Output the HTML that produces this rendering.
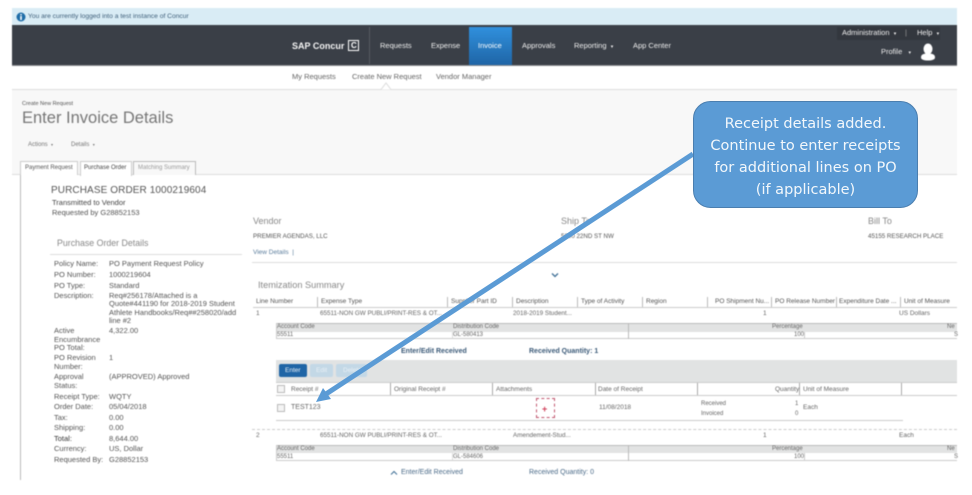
<!DOCTYPE html>
<html><head><meta charset="utf-8"><style>
html,body{margin:0;padding:0;background:#fff}
body{width:972px;height:495px;position:relative;overflow:hidden;font-family:"Liberation Sans",sans-serif}
#p{position:absolute;left:0;top:0;width:972px;height:495px;overflow:hidden;filter:blur(.4px)}
#p i{font-style:normal;position:absolute;white-space:nowrap;line-height:10px;font-size:7px;color:#555}
#p b{position:absolute;display:block;font-weight:normal}
.n{color:#eee!important;font-size:7.5px!important}
.s{color:#666!important;font-size:7.5px!important}
.l{color:#555!important;font-size:7.5px!important}
.h{color:#555!important;font-size:6.5px!important}
.k{color:#3b5a78!important;font-size:7px!important;font-weight:bold}
.x{color:#666!important;font-size:6.5px!important}
.c{color:#555!important;font-size:6.2px!important}
</style></head><body>
<div id="p">
<b style="left:12px;top:8px;width:945px;height:17px;background:#d9ecf5"></b>
<b style="left:12px;top:25px;width:945px;height:41px;background:#3a3f47;border-bottom:1px solid #8a8d90;box-sizing:border-box"></b>
<b style="left:837px;top:27px;width:103px;height:13px;background:#33373e"></b>
<b style="left:469px;top:27px;width:43px;height:38px;background:linear-gradient(#3090dd,#1f65a6)"></b>
<b style="left:369px;top:27px;width:1px;height:37px;background:#555a60"></b>
<b style="left:12px;top:66px;width:945px;height:23px;background:#fff;border-bottom:1px solid #ddd;box-sizing:content-box"></b>
<b style="left:12px;top:90px;width:945px;height:84px;background:#f8f8f8;border-bottom:1px solid #ddd"></b>
<svg style="position:absolute;left:378px;top:82px" width="16" height="9"><path d="M0 7.5H3L8 1L13 7.5H16" fill="#fff" stroke="#ddd"/></svg>

<svg style="position:absolute;left:16px;top:12px" width="10" height="10"><circle cx="5" cy="5" r="4.5" fill="#1f6da8"/><rect x="4.2" y="4" width="1.6" height="4" fill="#fff"/><rect x="4.2" y="2" width="1.6" height="1.3" fill="#fff"/></svg>
<i style="left:28px;top:12px;font-size:6.7px;color:#3f5f7a">You are currently logged into a test instance of Concur</i>
<i style="left:292px;top:41px;font-size:9px;font-weight:bold;color:#f4f4f4">SAP Concur</i>
<b style="left:348px;top:40px;width:11px;height:11px;border:1.2px solid #fff;box-sizing:border-box"></b>
<i style="left:351px;top:41px;font-size:8px;font-weight:bold;color:#fff">C</i>
<i class="n" style="left:380px;top:41px">Requests</i>
<i class="n" style="left:431px;top:41px">Expense</i>
<i class="n" style="left:478px;top:41px;color:#fff!important">Invoice</i>
<i class="n" style="left:522px;top:41px">Approvals</i>
<i class="n" style="left:574px;top:41px">Reporting &nbsp;<span style="font-size:5px">▾</span></i>
<i class="n" style="left:633px;top:41px">App Center</i>
<i class="n" style="left:842px;top:28px">Administration &nbsp;<span style="font-size:5px">▾</span></i>
<i class="n" style="left:905px;top:28px;color:#999!important">|</i>
<i class="n" style="left:917px;top:28px">Help &nbsp;<span style="font-size:5px">▾</span></i>
<i class="n" style="left:881px;top:47px">Profile &nbsp;&nbsp;<span style="font-size:5px">▾</span></i>
<svg style="position:absolute;left:920px;top:43px" width="16" height="18"><ellipse cx="8" cy="6" rx="4.5" ry="5.5" fill="#fff"/><path d="M1 14.5C1 11 4 10.5 8 10.5S15 11 15 14.5C15 16.5 12 17.5 8 17.5S1 16.5 1 14.5Z" fill="#fff"/></svg>

<i class="s" style="left:292px;top:72px">My Requests</i>
<i class="s" style="left:352px;top:72px">Create New Request</i>
<i class="s" style="left:436px;top:72px">Vendor Manager</i>
<i style="left:22px;top:99px;font-size:5.5px;color:#555">Create New Request</i>
<i style="left:22px;top:108px;font-size:16.5px;line-height:20px;color:#777">Enter Invoice Details</i>
<i style="left:28px;top:140px;font-size:6px;color:#777">Actions &nbsp;<span style="font-size:4px">▾</span></i>
<i style="left:71px;top:140px;font-size:6px;color:#777">Details &nbsp;<span style="font-size:4px">▾</span></i>

<b style="left:20px;top:174px;width:1px;height:306px;background:#bbb"></b>
<b style="left:20px;top:161px;width:58px;height:14px;background:#fff;border:1px solid #ccc;border-bottom:none;box-sizing:border-box"></b>
<b style="left:80px;top:161px;width:52px;height:15px;background:#fff;border:1px solid #ccc;border-bottom:none;box-sizing:border-box"></b>
<b style="left:133px;top:161px;width:63px;height:14px;background:#f8f8f8;border:1px solid #bbb;border-bottom:none;box-sizing:border-box"></b>
<i style="left:25px;top:163px;font-size:6px;color:#555">Payment Request</i>
<i style="left:84px;top:163px;font-size:6px;color:#444">Purchase Order</i>
<i style="left:138px;top:163px;font-size:6px;color:#999">Matching Summary</i>

<i style="left:51px;top:186px;font-size:10px;color:#555;letter-spacing:.1px">PURCHASE ORDER 1000219604</i>
<i class="l" style="left:52px;top:198px;color:#444!important">Transmitted to Vendor</i>
<i class="l" style="left:52px;top:208px">Requested by G28852153</i>
<i style="left:57px;top:238px;font-size:8.8px;color:#888">Purchase Order Details</i>
<b style="left:50px;top:254px;width:192px;height:1px;background:#ddd"></b>

<i class="l" style="left:54px;top:259px">Policy Name:</i><i class="l" style="left:109px;top:259px">PO Payment Request Policy</i>
<i class="l" style="left:54px;top:270px">PO Number:</i><i class="l" style="left:109px;top:270px">1000219604</i>
<i class="l" style="left:54px;top:281px">PO Type:</i><i class="l" style="left:109px;top:281px">Standard</i>
<i class="l" style="left:54px;top:291px">Description:</i>
<i class="l" style="left:109px;top:292px;line-height:8.3px;white-space:normal;width:128px">Req#256178/Attached is a<br>Quote#441190 for 2018-2019 Student<br>Athlete Handbooks/Req##258020/add<br>line #2</i>
<i class="l" style="left:54px;top:327px;line-height:8.5px">Active<br>Encumbrance<br>PO Total:</i><i class="l" style="left:109px;top:326px">4,322.00</i>
<i class="l" style="left:54px;top:354px;line-height:8.5px">PO Revision<br>Number:</i><i class="l" style="left:109px;top:353px">1</i>
<i class="l" style="left:54px;top:373px;line-height:8.5px">Approval<br>Status:</i><i class="l" style="left:109px;top:372px">(APPROVED) Approved</i>
<i class="l" style="left:54px;top:392px">Receipt Type:</i><i class="l" style="left:109px;top:392px">WQTY</i>
<i class="l" style="left:54px;top:402px">Order Date:</i><i class="l" style="left:109px;top:402px">05/04/2018</i>
<i class="l" style="left:54px;top:413px">Tax:</i><i class="l" style="left:109px;top:413px">0.00</i>
<i class="l" style="left:54px;top:423px">Shipping:</i><i class="l" style="left:109px;top:423px">0.00</i>
<i class="l" style="left:54px;top:434px;color:#333!important">Total:</i><i class="l" style="left:109px;top:434px">8,644.00</i>
<i class="l" style="left:54px;top:444px">Currency:</i><i class="l" style="left:109px;top:444px">US, Dollar</i>
<i class="l" style="left:54px;top:455px">Requested By:</i><i class="l" style="left:109px;top:455px">G28852153</i>

<i style="left:253px;top:216px;font-size:9px;color:#888">Vendor</i>
<i style="left:561px;top:216px;font-size:9px;color:#888">Ship To</i>
<i style="left:868px;top:216px;font-size:9px;color:#888">Bill To</i>
<i class="c" style="left:253px;top:232px">PREMIER AGENDAS, LLC</i>
<i class="c" style="left:561px;top:232px">5000 22ND ST NW</i>
<i class="c" style="left:868px;top:232px">45155 RESEARCH PLACE</i>
<i style="left:253px;top:248px;font-size:6.5px;color:#5b7d9c">View Details &nbsp;|</i>
<b style="left:252px;top:262px;width:705px;height:1px;background:#ddd"></b>
<svg style="position:absolute;left:551px;top:272px" width="8" height="6"><path d="M1 1.5L4 4.5L7 1.5" fill="none" stroke="#3f6f96" stroke-width="1.3"/></svg>
<i style="left:258px;top:279px;font-size:9.2px;line-height:12px;color:#888">Itemization Summary</i>

<b style="left:253px;top:307px;width:704px;height:1px;background:#ccc"></b>
<b style="left:317px;top:297px;width:1px;height:10px;background:#bbb"></b>
<b style="left:447px;top:297px;width:1px;height:10px;background:#bbb"></b>
<b style="left:512px;top:297px;width:1px;height:10px;background:#bbb"></b>
<b style="left:577px;top:297px;width:1px;height:10px;background:#bbb"></b>
<b style="left:642px;top:297px;width:1px;height:10px;background:#bbb"></b>
<b style="left:707px;top:297px;width:1px;height:10px;background:#bbb"></b>
<b style="left:771px;top:297px;width:1px;height:10px;background:#bbb"></b>
<b style="left:836px;top:297px;width:1px;height:10px;background:#bbb"></b>
<b style="left:900px;top:297px;width:1px;height:10px;background:#bbb"></b>
<i class="h" style="left:256px;top:297px">Line Number</i>
<i class="h" style="left:321px;top:297px">Expense Type</i>
<i class="h" style="left:451px;top:297px">Supplier Part ID</i>
<i class="h" style="left:516px;top:297px">Description</i>
<i class="h" style="left:581px;top:297px">Type of Activity</i>
<i class="h" style="left:646px;top:297px">Region</i>
<i class="h" style="left:715px;top:297px">PO Shipment Nu...</i>
<i class="h" style="left:775px;top:297px">PO Release Number</i>
<i class="h" style="left:839px;top:297px">Expenditure Date ...</i>
<i class="h" style="left:904px;top:297px">Unit of Measure</i>
<i class="x" style="left:256px;top:309px">1</i>
<i class="x" style="left:320px;top:309px;font-size:6.3px!important">65511-NON GW PUBLI/PRINT-RES &amp; OT...</i>
<i class="x" style="left:513px;top:309px;font-size:6.3px!important">2018-2019 Student...</i>
<i class="x" style="left:763px;top:309px">1</i>
<i class="x" style="left:899px;top:309px">US Dollars</i>

<b style="left:276px;top:323px;width:681px;height:8px;background:#e2e3e3;border-top:1px solid #bbb"></b>
<b style="left:276px;top:332px;width:681px;height:6px;border-bottom:1px solid #ccc"></b>
<b style="left:276px;top:323px;width:1px;height:16px;background:#ccc"></b>
<b style="left:452px;top:332px;width:1px;height:6px;background:#ddd"></b>
<b style="left:628px;top:323px;width:1px;height:16px;background:#bbb"></b>
<b style="left:804px;top:332px;width:1px;height:6px;background:#ccc"></b>
<i class="x" style="left:277px;top:322px;font-size:6px!important">Account Code</i>
<i class="x" style="left:453px;top:322px;font-size:6px!important">Distribution Code</i>
<i class="x" style="left:772px;top:322px;font-size:6px!important">Percentage</i>
<i class="x" style="left:947px;top:322px;font-size:6px!important">Ne</i>
<i class="x" style="left:277px;top:330px;font-size:6px!important">55511</i>
<i class="x" style="left:453px;top:330px;font-size:6px!important">GL-580413</i>
<i class="x" style="left:794px;top:330px;font-size:6px!important">100</i>
<i class="x" style="left:954px;top:330px;font-size:6px!important">S</i>

<i class="k" style="left:401px;top:347px">Enter/Edit Received</i>
<i class="k" style="left:529px;top:347px">Received Quantity: 1</i>

<b style="left:276px;top:360px;width:681px;height:22px;background:#e1e3e3;border-bottom:1px solid #ccc"></b>
<b style="left:279px;top:364px;width:28px;height:13px;background:#1f65a6;border-radius:2px"></b>
<b style="left:310px;top:364px;width:23px;height:13px;background:#c3d8e6;border-radius:2px"></b>
<b style="left:336px;top:364px;width:31px;height:13px;background:#c3d8e6;border-radius:2px"></b>
<i style="left:285px;top:366px;font-size:6.5px;color:#e8f0f6">Enter</i>
<i style="left:316px;top:366px;font-size:6.5px;color:#e8f0f6">Edit</i>
<i style="left:343px;top:366px;font-size:6.5px;color:#e8f0f6">Delete</i>

<b style="left:277px;top:385px;width:6px;height:6px;background:#f4f4f4;border:1px solid #bbb"></b>
<b style="left:276px;top:395px;width:681px;height:1px;background:#ccc"></b>
<b style="left:390px;top:383px;width:1px;height:12px;background:#aaa"></b>
<b style="left:492px;top:383px;width:1px;height:12px;background:#aaa"></b>
<b style="left:595px;top:383px;width:1px;height:12px;background:#aaa"></b>
<b style="left:697px;top:383px;width:1px;height:12px;background:#aaa"></b>
<b style="left:799px;top:383px;width:1px;height:12px;background:#aaa"></b>
<b style="left:901px;top:383px;width:1px;height:12px;background:#aaa"></b>
<i class="x" style="left:291px;top:385px">Receipt #</i>
<i class="x" style="left:394px;top:385px">Original Receipt #</i>
<i class="x" style="left:496px;top:385px">Attachments</i>
<i class="x" style="left:598px;top:385px">Date of Receipt</i>
<i class="x" style="left:775px;top:385px">Quantity</i>
<i class="x" style="left:803px;top:385px">Unit of Measure</i>

<b style="left:277px;top:404px;width:6px;height:6px;background:#f4f4f4;border:1px solid #bbb"></b>
<i class="x" style="left:291px;top:403px;font-size:7px!important">TEST123</i>
<b style="left:536px;top:398px;width:19px;height:20px;border:1px dashed #c0566e;box-sizing:border-box"></b>
<i style="left:542px;top:404px;font-size:9px;font-weight:bold;color:#cf3b56">+</i>
<i class="x" style="left:599px;top:403px">11/08/2018</i>
<i class="x" style="left:701px;top:399px;font-size:6px!important">Received</i>
<i class="x" style="left:701px;top:409px;font-size:6px!important">Invoiced</i>
<i class="x" style="left:795px;top:399px;font-size:6px!important">1</i>
<i class="x" style="left:795px;top:409px;font-size:6px!important">0</i>
<i class="x" style="left:803px;top:403px">Each</i>
<b style="left:276px;top:420px;width:627px;height:1px;background:#ccc"></b>

<b style="left:252px;top:429px;width:705px;height:0;border-top:1px dashed #ccc"></b>
<i class="x" style="left:256px;top:431px">2</i>
<i class="x" style="left:320px;top:431px;font-size:6.3px!important">65511-NON GW PUBLI/PRINT-RES &amp; OT...</i>
<i class="x" style="left:513px;top:431px;font-size:6.3px!important">Amendement-Stud...</i>
<i class="x" style="left:763px;top:431px">1</i>
<i class="x" style="left:899px;top:431px">Each</i>

<b style="left:276px;top:445px;width:681px;height:7px;background:#e2e3e3;border-top:1px solid #bbb"></b>
<b style="left:276px;top:453px;width:681px;height:7px;border-bottom:1px solid #ccc"></b>
<b style="left:276px;top:445px;width:1px;height:16px;background:#ccc"></b>
<b style="left:452px;top:453px;width:1px;height:7px;background:#ddd"></b>
<b style="left:628px;top:445px;width:1px;height:16px;background:#bbb"></b>
<b style="left:804px;top:453px;width:1px;height:7px;background:#ccc"></b>
<i class="x" style="left:277px;top:444px;font-size:6px!important">Account Code</i>
<i class="x" style="left:453px;top:444px;font-size:6px!important">Distribution Code</i>
<i class="x" style="left:772px;top:444px;font-size:6px!important">Percentage</i>
<i class="x" style="left:947px;top:444px;font-size:6px!important">Ne</i>
<i class="x" style="left:277px;top:452px;font-size:6px!important">55511</i>
<i class="x" style="left:453px;top:452px;font-size:6px!important">GL-584606</i>
<i class="x" style="left:794px;top:452px;font-size:6px!important">100</i>
<i class="x" style="left:954px;top:452px;font-size:6px!important">S</i>

<svg style="position:absolute;left:390px;top:470px" width="8" height="6"><path d="M1 4.5L4 1.5L7 4.5" fill="none" stroke="#3f6f96" stroke-width="1"/></svg>
<i class="k" style="left:401px;top:468px;font-weight:normal;color:#4a6a88!important">Enter/Edit Received</i>
<i class="k" style="left:529px;top:468px;font-weight:normal;color:#4a6a88!important">Received Quantity: 0</i>
</div>

<svg style="position:absolute;left:0;top:0" width="972" height="495">
<path d="M693 154L326 394" stroke="#5b9bd5" stroke-width="5" fill="none"/>
<path d="M316 402L323 388L331 399Z" fill="#5b9bd5"/>
<rect x="693.5" y="101.5" width="224" height="106" rx="17" fill="#5b9bd5" stroke="#4a7eaf"/>
<g font-family="DejaVu Sans, sans-serif" font-size="14.5" fill="#f2f7fb" text-anchor="middle">
<text x="805.5" y="128">Receipt details added.</text>
<text x="805.5" y="150">Continue to enter receipts</text>
<text x="805.5" y="172">for additional lines on PO</text>
<text x="805.5" y="194">(if applicable)</text>
</g>
</svg>
</body></html>
